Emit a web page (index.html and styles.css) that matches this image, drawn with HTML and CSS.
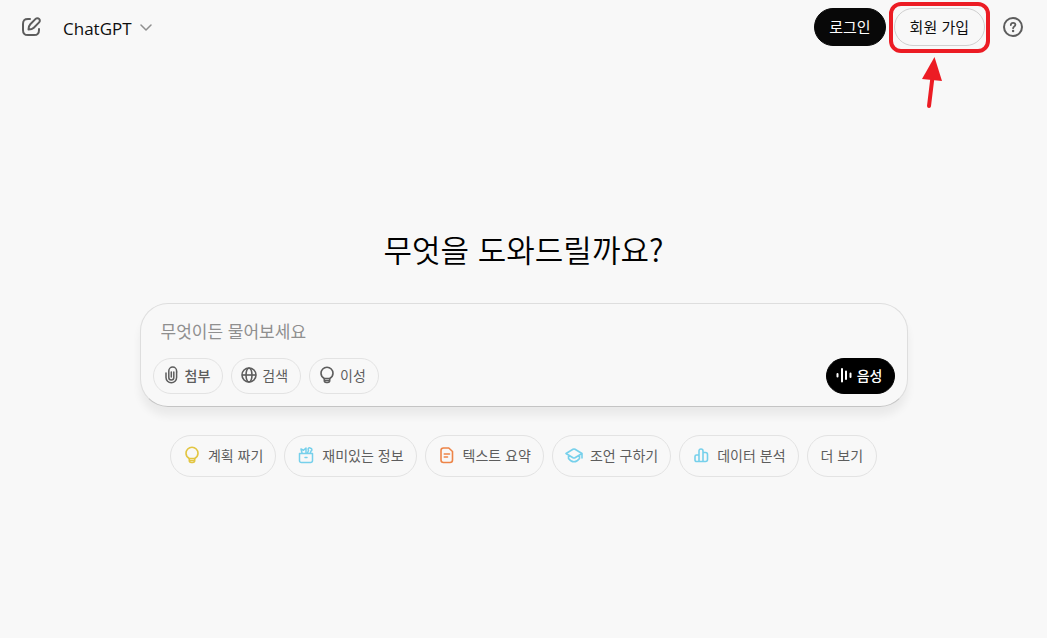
FILE: index.html
```html
<!DOCTYPE html>
<html lang="ko">
  <head>
    <meta charset="UTF-8" />
    <meta name="viewport" content="width=device-width, initial-scale=1.0" />
    <title>ChatGPT</title>
    <link rel="stylesheet" href="styles.css">
  </head>
  <body>
    <header class="header">
      <button type="button" class="icon-btn" aria-label="새 채팅">
        <svg width="24" height="24" viewBox="0 0 24 24" fill="none" stroke="currentColor" stroke-width="2" stroke-linecap="round" stroke-linejoin="round">
          <path d="M10 4H8c-2 0-3 .3-3.800 1.100C3.300 6 3 7 3 9v6c0 2 .3 3 1.200 3.800C5 19.700 6 20 8 20h6c2 0 3-.3 3.800-1.200C18.700 18 19 17 19 15v-1" />
          <path d="M8.500 14.500c0-2.600.5-4 1.800-5.300l5.300-5.300a2.400 2.400 0 0 1 3.500 3.500l-5.300 5.300C12.500 14 11.100 14.500 8.500 14.500z" />
        </svg>
      </button>
      <button type="button" class="model-btn">
        ChatGPT
        <svg width="12" height="12" viewBox="0 0 12 12" fill="none" stroke="#8f8f8f" stroke-width="1.500" stroke-linecap="round" stroke-linejoin="round">
          <path d="M1 3l5 5 5-5" />
        </svg>
      </button>
      <div class="header-right">
        <button type="button" class="auth-btn login">로그인</button>
        <div class="signup-wrap">
          <button type="button" class="auth-btn signup">회원 가입</button>
          <span class="marker"></span>
          <svg class="arrow" width="22" height="52" viewBox="0 0 22 52">
            <path d="M8 49L11.500 20" stroke="#ec1c24" stroke-width="4" stroke-linecap="round" />
            <path d="M13.500 0L21 24 1 22z" fill="#ec1c24" />
          </svg>
        </div>
        <button type="button" class="icon-btn help" aria-label="도움말">
          <svg width="22" height="22" viewBox="0 0 22 22" fill="none" stroke="currentColor" stroke-width="2" stroke-linecap="round">
            <circle cx="11" cy="11" r="9" />
            <path d="M8.800 9c.1-1.400 1.100-2.200 2.300-2.200 1.300 0 2.300.8 2.300 2 0 1.700-2.300 1.700-2.300 3.400" stroke-width="1.800" />
            <circle cx="11.100" cy="15" r="1.200" fill="currentColor" stroke="none" />
          </svg>
        </button>
      </div>
    </header>

    <main class="main">
      <h1 class="title">무엇을 도와드릴까요?</h1>

      <form class="composer">
        <input type="text" class="prompt" aria-label="메시지" placeholder="무엇이든 물어보세요" />
        <div class="tools">
          <button type="button" class="tool attach">
            <svg width="18" height="18" viewBox="0 0 18 18" fill="none" stroke="currentColor" stroke-width="1.500" stroke-linecap="round">
              <path d="M3 7v4.500a5.300 5.300 0 0 0 10.600 0V6" />
              <path d="M10.800 6v5.500a2.500 2.500 0 0 1-5 0V5a3.900 3.900 0 0 1 7.800 0v1M8.300 6v5" />
            </svg>
            첨부
          </button>
          <button type="button" class="tool">
            <svg width="18" height="18" viewBox="0 0 18 18" fill="none" stroke="currentColor" stroke-width="1.600">
              <circle cx="9" cy="9" r="7" />
              <ellipse cx="9" cy="9" rx="3" ry="7" />
              <path d="M2 9h14" />
            </svg>
            검색
          </button>
          <button type="button" class="tool">
            <svg width="18" height="18" viewBox="0 0 18 18" fill="none" stroke="currentColor" stroke-width="1.600" stroke-linejoin="round">
              <path d="M6.300 12.500C4.300 11.300 3 9.500 3 7.200a6 6 0 0 1 12 0c0 2.300-1.300 4.100-3.300 5.300z" />
              <path d="M6.300 12.500v2c0 1.300.8 2 2 2h1.400c1.200 0 2-.7 2-2v-2M6.300 14.500h5.400" />
            </svg>
            이성
          </button>
          <button type="button" class="tool voice">
            <svg width="18" height="18" viewBox="0 0 18 18" fill="none" stroke="currentColor" stroke-width="2" stroke-linecap="round">
              <path d="M2.500 8v2.500M7 3v12.500M11 5.500v7.500M15.500 7.500v3.500" />
            </svg>
            음성
          </button>
        </div>
      </form>

      <div class="suggestions">
        <button type="button" class="chip">
          <svg class="yellow" width="18" height="18" viewBox="0 0 18 18" fill="none" stroke="currentColor" stroke-width="1.600" stroke-linejoin="round">
            <path d="M6.300 12.500C4.300 11.300 3 9.500 3 7.200a6 6 0 0 1 12 0c0 2.300-1.300 4.100-3.300 5.300z" />
            <path d="M6.300 12.500v2c0 1.300.8 2 2 2h1.400c1.200 0 2-.7 2-2v-2M6.300 14.500h5.400" />
          </svg>
          계획 짜기
        </button>
        <button type="button" class="chip">
          <svg class="blue" width="18" height="18" viewBox="0 0 18 18" fill="none" stroke="currentColor" stroke-width="1.500" stroke-linecap="round" stroke-linejoin="round">
            <path d="M2.500 7.500h13v7c0 1.300-.7 2-2 2h-9c-1.300 0-2-.7-2-2zM8 11.500h2" />
            <path d="M5 7L4 3l2.500 1.200L9 2v5M10.500 7l1-2.500c-1.300-2 .8-3.500 2-2.200 1.800.2 1.800 2.200.5 2.700l-.7 2" />
          </svg>
          재미있는 정보
        </button>
        <button type="button" class="chip">
          <svg class="orange" width="18" height="18" viewBox="0 0 18 18" fill="none" stroke="currentColor" stroke-width="1.600" stroke-linecap="round" stroke-linejoin="round">
            <path d="M5.500 2h5.300L14.500 5.500v8.500c0 1.500-.5 2.500-2.500 2.500H5.500C3.500 16.500 3 15.500 3 14V4.500C3 3 3.500 2 5.500 2zM6.300 8h5.200M6.300 11h3.200" />
          </svg>
          텍스트 요약
        </button>
        <button type="button" class="chip">
          <svg class="blue" width="18" height="18" viewBox="0 0 18 18" fill="none" stroke="currentColor" stroke-width="1.600" stroke-linecap="round" stroke-linejoin="round">
            <path d="M1 7.500l7-4.200q1-.6 2 0l7 4.200-7 4.200q-1 .6-2 0zM3.500 9v3.500c1.500 2 3 3.300 5.500 3.300s4-1.300 5.500-3.300V9M17 7.500v4.500" />
          </svg>
          조언 구하기
        </button>
        <button type="button" class="chip">
          <svg class="blue" width="18" height="18" viewBox="0 0 18 18" fill="none" stroke="currentColor" stroke-width="1.600" stroke-linejoin="round">
            <path d="M7 9H4.500A1.500 1.500 0 0 0 3 10.500V14a1.500 1.500 0 0 0 1.500 1.500H7zM7 15.500V5c0-1.300.7-2 2-2s2 .7 2 2v10.500zM11 15.500V6.500h2.500a2 2 0 0 1 2 2v5a2 2 0 0 1-2 2z" />
          </svg>
          데이터 분석
        </button>
        <button type="button" class="chip more">더 보기</button>
      </div>
    </main>
  </body>
</html>
```

FILE: styles.css
```css
* {
  box-sizing: border-box;
}
body {
  margin: 0;
  min-height: 100vh;
  display: flex;
  flex-direction: column;
  background: #f8f8f8;
  color: #0d0d0d;
  font-family: "Noto Sans CJK KR", sans-serif;
}
button,
input {
  font: inherit;
  color: inherit;
}
button {
  display: flex;
  align-items: center;
  padding: 0;
  border: none;
  background: none;
  white-space: nowrap;
  cursor: pointer;
}
svg {
  display: block;
  flex-shrink: 0;
}

.header {
  display: flex;
  align-items: center;
  height: 54px;
  padding: 0 23px 0 20px;
}
.icon-btn {
  color: #5d5d5d;
}
.model-btn {
  gap: 8px;
  margin-left: 19px;
  padding-top: 2px;
  font-family: "Open Sans", sans-serif;
  font-size: 17px;
}
.header-right {
  display: flex;
  align-items: center;
  gap: 8px;
  margin-left: auto;
}
.auth-btn {
  justify-content: center;
  height: 38px;
  padding: 0 14px 2px;
  border: 1px solid #080808;
  border-radius: 19px;
  font-size: 15px;
}
.login {
  background: #080808;
  color: #fff;
}
.signup {
  padding: 0 15px 2px;
  border-color: #d0d0d0;
}
.help {
  margin-left: 9px;
}
.signup-wrap {
  position: relative;
}
/* red frame and arrow over the sign-up button */
.marker {
  position: absolute;
  inset: -6px -5px -7px;
  border: 4px solid #ec1c24;
  border-radius: 12px;
  pointer-events: none;
}
.arrow {
  position: absolute;
  top: 49px;
  left: 27px;
}

.main {
  flex: 1;
  display: flex;
  flex-direction: column;
  align-items: center;
  justify-content: center;
  padding: 14px 16px 0;
}
.title {
  margin: 0 0 34px;
  font-family: "Noto Sans CJK KR DemiLight", "Noto Sans CJK KR", sans-serif;
  font-size: 31px;
  line-height: 40px;
  font-weight: 350;
  color: #000;
}
.composer {
  width: 100%;
  max-width: 768px;
  padding: 12px;
  border: 1px solid #dedede;
  border-bottom-color: #c4c4c4;
  border-radius: 28px;
  background: #f8f8f8;
  box-shadow: 0 9px 9px rgba(0, 0, 0, 0.06);
}
.prompt {
  display: block;
  width: 100%;
  height: 28px;
  margin-bottom: 14px;
  padding: 0 8px;
  border: none;
  outline: none;
  background: none;
  font-size: 17px;
}
.prompt::placeholder {
  color: #8f8f8f;
}
.tools {
  display: flex;
  gap: 8px;
}
.tool {
  gap: 4px;
  height: 36px;
  padding: 0 12px 2px 8px;
  border: 1px solid #e3e3e3;
  border-radius: 18px;
  color: #5d5d5d;
  font-size: 14px;
}
.attach {
  padding-left: 9px;
  font-weight: 500;
}
.voice {
  margin-left: auto;
  padding: 0 11px 2px 8px;
  border-color: #000;
  background: #000;
  color: #fff;
  font-weight: 500;
}

.suggestions {
  display: flex;
  flex-wrap: wrap;
  justify-content: center;
  gap: 8px;
  margin-top: 28px;
}
.chip {
  gap: 7px;
  height: 42px;
  padding: 0 12px 2px;
  border: 1px solid #e3e3e3;
  border-radius: 21px;
  color: #5d5d5d;
  font-size: 14px;
}
.more {
  padding: 0 13px 2px;
}
.yellow {
  color: #e2c541;
}
.blue {
  color: #76d0eb;
}
.orange {
  color: #ed8447;
}
```
